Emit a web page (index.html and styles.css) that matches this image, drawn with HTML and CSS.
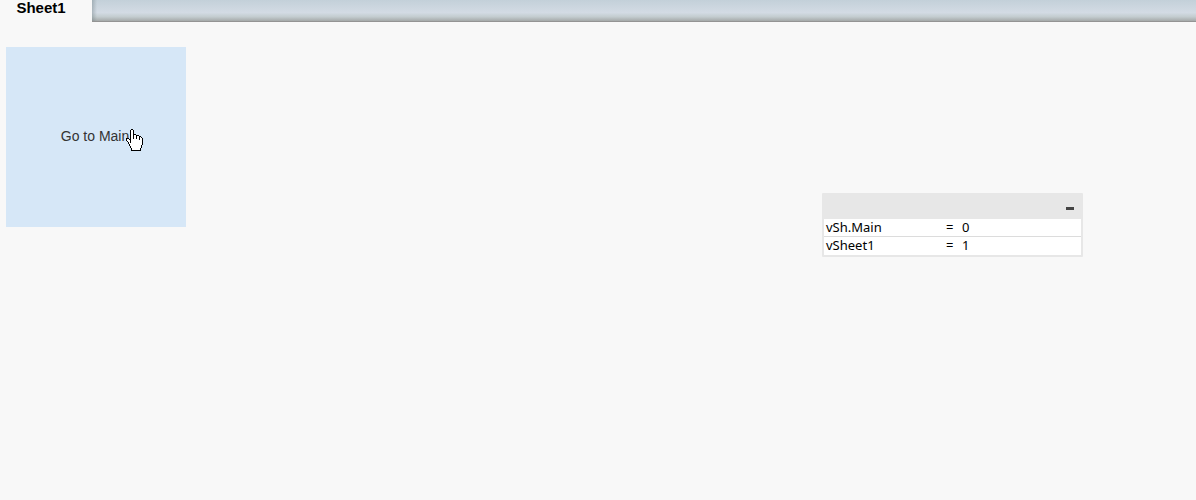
FILE: index.html
```
<!DOCTYPE html>
<html lang="en">
  <head>
    <meta charset="UTF-8" />
    <meta name="viewport" content="width=device-width, initial-scale=1.0" />
    <title>Sheet1</title>
    <link rel="stylesheet" href="styles.css">
  </head>

  <body>
    <nav class="tabs">
      <button class="tab" type="button">Sheet1</button>
      <div class="tabs-rest"></div>
    </nav>

    <main class="sheet">
      <button class="go-main" type="button">Go to Main</button>

      <section class="variables">
        <header class="variables-head">
          <button class="minimize" type="button" aria-label="Minimize"></button>
        </header>
        <table class="variables-list">
          <tr>
            <th scope="row">vSh.Main</th>
            <td class="equals">=</td>
            <td>0</td>
          </tr>
          <tr>
            <th scope="row">vSheet1</th>
            <td class="equals">=</td>
            <td>1</td>
          </tr>
        </table>
      </section>

      <!-- hand pointer -->
      <svg class="pointer" width="17" height="22" viewBox="0 0 17 22" aria-hidden="true">
        <path fill="#fff" stroke="#000" d="M5.5 .5H6.5L7.5 1.5V5.5H9.5L10.5 6.5H12.5L13.5 7.5H14.5L16.5 9.5V15.5L15.5 16.5V18.5L14.5 19.5V21.5H5.5V19.5L4.5 18.5V17.5L3.5 16.5V15.5L2.5 14.5V13.5L.5 11.5V9.5H2.5L4.5 11.5V1.5Z" />
        <path fill="none" stroke="#000" d="M4.5 11V14M7.5 5V10M10.5 6V10M13.5 7V11" />
      </svg>
    </main>
  </body>
</html>
```

FILE: styles.css
```
body {
  display: flex;
  flex-direction: column;
  min-height: 100vh;
  margin: 0;
  background-color: #f8f8f8;
  color: #000;
  font-family: "Liberation Sans", Arial, sans-serif;
}

button {
  border: 0;
  padding: 0;
  font-family: inherit;
  cursor: pointer;
}

.tabs {
  display: flex;
  height: 22px;
}

.tab {
  width: 92px;
  padding: 0 10px 6px 0;
  background-color: #f8f8f8;
  color: #000;
  font-size: 15px;
  font-weight: bold;
  line-height: 16px;
}

.tabs-rest {
  flex: 1;
  border-bottom: 1px solid #949494;
  background:
    linear-gradient(to right, rgba(110, 125, 130, 0.4), transparent 5px),
    linear-gradient(#c3d0d9, #d3dbe4 60%, #c3cccf 80%, #a5a9a9);
}

/* sheet objects are placed freely on the canvas */
.sheet {
  position: relative;
  flex: 1;
}

.go-main {
  position: absolute;
  top: 25px;
  left: 6px;
  width: 180px;
  height: 180px;
  padding: 0 2px 2px 0;
  background-color: #d6e7f7;
  color: #333;
  font-size: 14px;
}

.variables {
  position: absolute;
  top: 171px;
  left: 822px;
  box-sizing: border-box;
  width: 261px;
  padding: 0 2px 2px;
  border-radius: 1px;
  background-color: #e7e7e7;
}

.variables-head {
  display: flex;
  justify-content: flex-end;
  align-items: center;
  height: 26px;
  padding: 0 7px;
}

.minimize {
  width: 8px;
  height: 3px;
  margin-top: 4px;
  background-color: #444;
}

.variables-list {
  width: 100%;
  border-collapse: collapse;
  background-color: #fff;
  font-family: "Noto Sans", Tahoma, sans-serif;
  font-size: 13px;
  line-height: 17px;
}

.variables-list th,
.variables-list td {
  padding: 0 2px;
  font-weight: normal;
  text-align: left;
}

.variables-list th {
  width: 116px;
}

.variables-list tr + tr {
  border-top: 1px solid #dcdcdc;
}

.variables-list tr + tr > * {
  padding-bottom: 1px;
}

.variables-list .equals {
  width: 12px;
}

.pointer {
  position: absolute;
  top: 107px;
  left: 126px;
  shape-rendering: crispEdges;
  pointer-events: none;
}
```
